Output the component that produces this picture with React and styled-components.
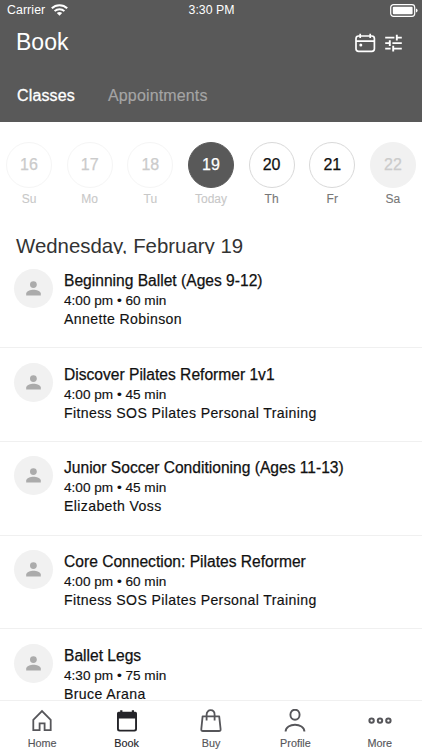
import React from 'react'
import styled, { createGlobalStyle } from 'styled-components';

const days = [
  { num: 16, label: 'Su', state: 'past' },
  { num: 17, label: 'Mo', state: 'past' },
  { num: 18, label: 'Tu', state: 'past' },
  { num: 19, label: 'Today', state: 'active' },
  { num: 20, label: 'Th', state: 'open' },
  { num: 21, label: 'Fr', state: 'open' },
  { num: 22, label: 'Sa', state: 'empty' },
];

const classes = [
  { title: 'Beginning Ballet (Ages 9-12)', time: '4:00 pm • 60 min', staff: 'Annette Robinson' },
  { title: 'Discover Pilates Reformer 1v1', time: '4:00 pm • 45 min', staff: 'Fitness SOS Pilates Personal Training' },
  { title: 'Junior Soccer Conditioning (Ages 11-13)', time: '4:00 pm • 45 min', staff: 'Elizabeth Voss' },
  { title: 'Core Connection: Pilates Reformer', time: '4:00 pm • 60 min', staff: 'Fitness SOS Pilates Personal Training' },
  { title: 'Ballet Legs', time: '4:30 pm • 75 min', staff: 'Bruce Arana' },
];

const circleColors = {
  past: { bg: '#fff', border: '#f5f5f5', text: '#cbcbcb', label: '#c8c8c8' },
  active: { bg: '#595959', border: '#595959', text: '#fff', label: '#c8c8c8' },
  open: { bg: '#fff', border: '#d9d9d9', text: '#111', label: '#777' },
  empty: { bg: '#f1f1f1', border: '#f1f1f1', text: '#cbcbcb', label: '#777' },
};

const WifiIcon = () => (
  <svg width="17" height="12" viewBox="0 0 17 12" fill="none" stroke="#fff" strokeWidth="2">
    <path d="M0.8 4.3C5 0.2 12 0.2 16.2 4.3" />
    <path d="M3.6 7.1C6.3 4.5 10.7 4.5 13.4 7.1" />
    <path d="M8.5 11.7L5.8 9Q8.5 6.8 11.2 9Z" fill="#fff" stroke="none" />
  </svg>
);

const BatteryIcon = () => (
  <svg width="28" height="13" viewBox="0 0 28 13">
    <rect x="0.7" y="0.7" width="24" height="11.6" rx="2.8" fill="none" stroke="#fff" strokeWidth="1.2" />
    <rect x="2.8" y="2.8" width="19.8" height="7.4" rx="1" fill="#fff" />
    <path d="M26 4.4Q27.6 5 27.6 6.5T26 8.6Z" fill="#fff" />
  </svg>
);

const CalendarIcon = () => (
  <svg width="21" height="20" viewBox="0 0 21 20" fill="none" stroke="#fff" strokeWidth="1.7">
    <rect x="1" y="3" width="18.4" height="15.4" rx="2.6" />
    <path d="M1 8.2H19.4M5.2 0.8V5M15.2 0.8V5" />
    <circle cx="5.8" cy="12" r="1.5" fill="#fff" stroke="none" />
  </svg>
);

const FilterIcon = () => (
  <svg width="17" height="18" viewBox="0 0 17 18" fill="none" stroke="#fff" strokeWidth="1.9">
    <path d="M0.2 3.6H9.4M11.8 3.6H16.8M11.8 0.8V6.4" />
    <path d="M0.2 9.1H4.8M7.4 9.1H16.8M4.8 6.3V11.9" />
    <path d="M0.2 14.6H5.6M8.2 14.6H16.8M8.2 11.8V17.4" />
  </svg>
);

const PersonIcon = () => (
  <svg width="15" height="15" viewBox="0 0 15 15" fill="#ababab">
    <circle cx="7.4" cy="3.6" r="3.4" />
    <path d="M0.2 14.4V12.6C0.2 10.2 4.6 8.8 7.5 8.8S14.8 10.2 14.8 12.6V14.4Z" />
  </svg>
);

const HomeIcon = () => (
  <svg width="24" height="24" viewBox="0 0 24 24" fill="none" stroke="#56565a" strokeWidth="1.8">
    <path d="M3.3 10.8L12 2.1L20.7 10.8V21.2H14.6V14.4H9.6V21.2H3.3Z" />
  </svg>
);

const BookIcon = () => (
  <svg width="24" height="24" viewBox="0 0 24 24">
    <path d="M2 4.4Q2 2.8 3.6 2.8H5.2V1.2H7.4V2.8H16.8V1.2H19V2.8H20.4Q22 2.8 22 4.4V20.2Q22 22.6 19.6 22.6H4.4Q2 22.6 2 20.2Z" fill="#242429" />
    <path d="M3.9 9.4H20.1V19.6Q20.1 20.8 18.9 20.8H5.1Q3.9 20.8 3.9 19.6Z" fill="#fff" />
  </svg>
);

const BuyIcon = () => (
  <svg width="24" height="24" viewBox="0 0 24 24" fill="none" stroke="#56565a" strokeWidth="1.8">
    <path d="M3.6 7.4H20.2L21.6 20.2Q21.7 22 20 22H3.9Q2.2 22 2.3 20.2Z" strokeLinejoin="round" />
    <path d="M7.6 11.4V5.8C7.6 -0.4 15.6 -0.4 15.6 5.8V11.4" />
  </svg>
);

const ProfileIcon = () => (
  <svg width="24" height="24" viewBox="0 0 24 24" fill="none" stroke="#56565a" strokeWidth="1.9">
    <ellipse cx="12" cy="5.7" rx="4.6" ry="5" />
    <path d="M2.6 22.6C2.6 13.4 21.4 13.4 21.4 22.6" />
  </svg>
);

const MoreIcon = () => (
  <svg width="24" height="24" viewBox="0 0 24 24" fill="none" stroke="#56565a" strokeWidth="2">
    <circle cx="3.6" cy="11.6" r="2.2" />
    <circle cx="12" cy="11.6" r="2.2" />
    <circle cx="20.4" cy="11.6" r="2.2" />
  </svg>
);

const tabs = [
  { label: 'Home', Icon: HomeIcon },
  { label: 'Book', Icon: BookIcon, active: true },
  { label: 'Buy', Icon: BuyIcon },
  { label: 'Profile', Icon: ProfileIcon },
  { label: 'More', Icon: MoreIcon },
];

function App() {
  return (
    <>
      <GlobalStyle />
      <Screen>
        <Header>
          <StatusBar>
            <Carrier>
              <span>Carrier</span>
              <WifiIcon />
            </Carrier>
            <Clock>3:30 PM</Clock>
            <Battery><BatteryIcon /></Battery>
          </StatusBar>
          <TitleBar>
            <PageTitle>Book</PageTitle>
            <Actions>
              <CalendarIcon />
              <FilterIcon />
            </Actions>
          </TitleBar>
          <Segments>
            <Segment $active>Classes</Segment>
            <Segment>Appointments</Segment>
          </Segments>
        </Header>
        <Week>
          {days.map((d) => (
            <Day key={d.num}>
              <DayCircle $c={circleColors[d.state]}>{d.num}</DayCircle>
              <DayLabel $c={circleColors[d.state]}>{d.label}</DayLabel>
            </Day>
          ))}
        </Week>
        <DateHeading>Wednesday, February 19</DateHeading>
        <List>
          {classes.map((c) => (
            <Row key={c.title}>
              <Avatar><PersonIcon /></Avatar>
              <Info>
                <ClassName>{c.title}</ClassName>
                <Time>{c.time}</Time>
                <Staff>{c.staff}</Staff>
              </Info>
            </Row>
          ))}
        </List>
        <TabBar>
          {tabs.map(({ label, Icon, active }) => (
            <Tab key={label} $active={active}>
              <Icon />
              <span>{label}</span>
            </Tab>
          ))}
        </TabBar>
      </Screen>
    </>
  )
}

const GlobalStyle = createGlobalStyle`
  * {
    box-sizing: border-box;
  }
  body {
    margin: 0;
    font-family: "Liberation Sans", Arial, sans-serif;
  }
  svg {
    display: block;
    flex-shrink: 0;
  }
`;

const Screen = styled.div`
  display: flex;
  flex-direction: column;
  width: 422px;
  height: 750px;
  overflow: hidden;
  background: #fff;
`;

const Header = styled.header`
  flex-shrink: 0;
  height: 122px;
  background: #595959;
  color: #fff;
`;

const StatusBar = styled.div`
  display: grid;
  grid-template-columns: 1fr auto 1fr;
  align-items: center;
  height: 20px;
  padding: 0 4px 0 7px;
  font-size: 12.3px;
`;

const Carrier = styled.div`
  display: flex;
  align-items: center;
  gap: 6px;
  letter-spacing: 0.1px;
`;

const Clock = styled.div`
  margin-right: 2px;
`;

const Battery = styled.div`
  display: flex;
  justify-content: flex-end;
`;

const TitleBar = styled.div`
  display: flex;
  align-items: center;
  justify-content: space-between;
  height: 45px;
  padding: 0 20px 0 16px;
`;

const PageTitle = styled.h1`
  margin: 0;
  font-size: 23px;
  font-weight: 400;
`;

const Actions = styled.div`
  display: flex;
  align-items: center;
  gap: 9px;
`;

const Segments = styled.nav`
  display: flex;
  align-items: center;
  gap: 33px;
  height: 61px;
  padding: 0 17px;
`;

const Segment = styled.span`
  font-size: 16px;
  letter-spacing: 0.15px;
  color: ${(p) => (p.$active ? '#fff' : '#a5a5a5')};
  -webkit-text-stroke: ${(p) => (p.$active ? '0.3px #fff' : '0.15px #a5a5a5')};
`;

const Week = styled.div`
  display: flex;
  flex-shrink: 0;
  justify-content: space-between;
  padding: 19.5px 6px 0;
  height: 112px;
`;

const Day = styled.div`
  display: flex;
  flex-direction: column;
  align-items: center;
  width: 46px;
`;

const DayCircle = styled.div`
  display: flex;
  align-items: center;
  justify-content: center;
  width: 46px;
  height: 46px;
  border-radius: 50%;
  border: 1px solid ${(p) => p.$c.border};
  background: ${(p) => p.$c.bg};
  color: ${(p) => p.$c.text};
  font-size: 16px;
  -webkit-text-stroke: 0.25px ${(p) => p.$c.text};
`;

const DayLabel = styled.div`
  margin-top: 4px;
  font-size: 12px;
  line-height: 14px;
  color: ${(p) => p.$c.label};
  -webkit-text-stroke: 0.1px ${(p) => p.$c.label};
`;

/* fixed height cuts the descenders off */
const DateHeading = styled.h2`
  flex-shrink: 0;
  margin: 0 0 0.5px;
  height: 20px;
  padding-left: 16px;
  overflow: hidden;
  font-size: 20.4px;
  line-height: 25px;
  font-weight: 400;
  color: #333;
`;

const List = styled.div`
  flex: 1;
  min-height: 0;
  overflow: hidden;
`;

const Row = styled.div`
  display: flex;
  gap: 11px;
  height: 93.7px;
  padding: 14.5px 14px 0;
  border-bottom: 1px solid #f0f0f0;
`;

const Avatar = styled.div`
  display: flex;
  align-items: center;
  justify-content: center;
  flex-shrink: 0;
  width: 39px;
  height: 39px;
  border-radius: 50%;
  background: #f1f1f1;
`;

const Info = styled.div`
  padding-top: 1px;
  color: #111;
  white-space: nowrap;
  -webkit-text-stroke: 0.15px #111;
`;

const ClassName = styled.div`
  font-size: 15.6px;
  line-height: 22px;
  -webkit-text-stroke: 0.25px #111;
`;

const Time = styled.div`
  font-size: 13.6px;
  line-height: 18px;
`;

const Staff = styled.div`
  font-size: 14.1px;
  line-height: 19px;
  letter-spacing: 0.37px;
`;

const TabBar = styled.nav`
  display: flex;
  flex-shrink: 0;
  height: 50.5px;
  border-top: 1px solid #f0f0f0;
  background: #fff;
`;

const Tab = styled.div`
  display: flex;
  flex: 1;
  flex-direction: column;
  align-items: center;
  padding-top: 8px;
  gap: 4px;
  font-size: 10.8px;
  line-height: 13px;
  color: ${(p) => (p.$active ? '#242429' : '#56565a')};
  -webkit-text-stroke: 0.15px ${(p) => (p.$active ? '#242429' : '#56565a')};
`;

export default App
